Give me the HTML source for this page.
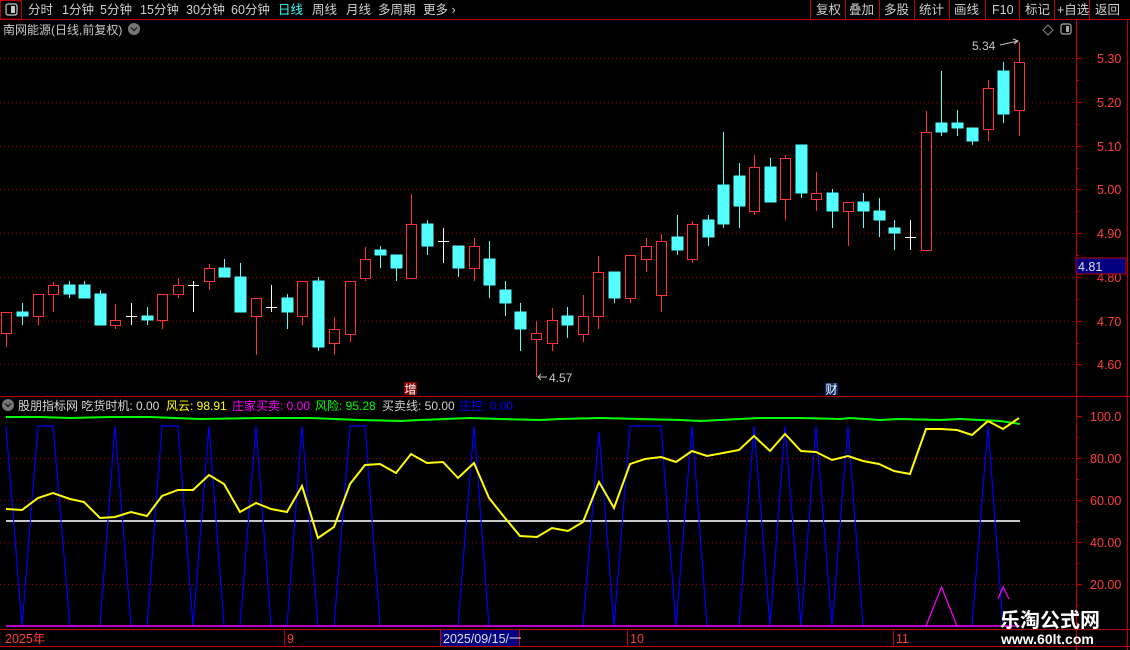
<!DOCTYPE html>
<html><head><meta charset="utf-8"><style>
html,body{margin:0;padding:0;background:#000;overflow:hidden}
svg{display:block}
text{font-family:"Liberation Sans","Noto Sans CJK SC",sans-serif}
</style></head><body>
<svg width="1130" height="650" viewBox="0 0 1130 650" xmlns="http://www.w3.org/2000/svg">
<rect width="1130" height="650" fill="#000"/>
<!-- top bar -->
<rect x="0.5" y="0.5" width="21" height="18.5" fill="none" stroke="#c00000"/>
<rect x="6" y="4" width="11" height="11" rx="2" fill="none" stroke="#c8c8c8" stroke-width="1.2"/>
<rect x="11" y="6" width="4" height="7" fill="#c8c8c8"/>
<line x1="0" y1="19.5" x2="1130" y2="19.5" stroke="#c00000"/>
<g font-size="12.5" fill="#d0d0d0">
<text x="28" y="14">分时</text><text x="62" y="14">1分钟</text><text x="100" y="14">5分钟</text>
<text x="140" y="14">15分钟</text><text x="186" y="14">30分钟</text><text x="231" y="14">60分钟</text>
<text x="278" y="14" fill="#33ffff">日线</text><text x="312" y="14">周线</text><text x="346" y="14">月线</text>
<text x="378" y="14">多周期</text><text x="423" y="14">更多 ›</text>
<text x="816" y="14">复权</text><text x="849" y="14">叠加</text><text x="884" y="14">多股</text>
<text x="919" y="14">统计</text><text x="954" y="14">画线</text><text x="992" y="14">F10</text>
<text x="1025" y="14">标记</text><text x="1057" y="14">+自选</text><text x="1095" y="14">返回</text>
</g>
<g stroke="#c00000"><line x1="810.5" y1="0" x2="810.5" y2="19"/><line x1="845.5" y1="0" x2="845.5" y2="19"/><line x1="879.5" y1="0" x2="879.5" y2="19"/><line x1="914.5" y1="0" x2="914.5" y2="19"/><line x1="949.5" y1="0" x2="949.5" y2="19"/><line x1="985.5" y1="0" x2="985.5" y2="19"/><line x1="1019.5" y1="0" x2="1019.5" y2="19"/><line x1="1054.5" y1="0" x2="1054.5" y2="19"/><line x1="1089.5" y1="0" x2="1089.5" y2="19"/></g>
<!-- title -->
<text x="3" y="34" font-size="12" fill="#c8c8c8">南网能源(日线,前复权)</text>
<circle cx="134" cy="29" r="6" fill="#777"/><path d="M131 27.5l3 3 3-3" stroke="#222" stroke-width="1.5" fill="none"/>
<path d="M1048 25l5 5-5 5-5-5z" fill="none" stroke="#888"/>
<rect x="1061" y="24" width="10" height="10" rx="2" fill="none" stroke="#aaa" stroke-width="1.2"/><rect x="1066" y="26" width="3" height="6" fill="#aaa"/>
<!-- right axis -->
<line x1="1076.5" y1="19" x2="1076.5" y2="650" stroke="#c00000"/>
<line x1="1127.5" y1="19" x2="1127.5" y2="650" stroke="#c00000"/>
<!-- grid main -->
<g stroke="#a00000" stroke-dasharray="1,3">
<line x1="0" y1="58.5" x2="1076" y2="58.5"/><line x1="0" y1="102.5" x2="1076" y2="102.5"/><line x1="0" y1="146.5" x2="1076" y2="146.5"/><line x1="0" y1="189.5" x2="1076" y2="189.5"/><line x1="0" y1="233.5" x2="1076" y2="233.5"/><line x1="0" y1="277.5" x2="1076" y2="277.5"/><line x1="0" y1="321.5" x2="1076" y2="321.5"/><line x1="0" y1="364.5" x2="1076" y2="364.5"/>
</g>
<g stroke="#c00000">
<line x1="1076" y1="58.5" x2="1082" y2="58.5"/><line x1="1076" y1="102.5" x2="1082" y2="102.5"/><line x1="1076" y1="146.5" x2="1082" y2="146.5"/><line x1="1076" y1="189.5" x2="1082" y2="189.5"/><line x1="1076" y1="233.5" x2="1082" y2="233.5"/><line x1="1076" y1="277.5" x2="1082" y2="277.5"/><line x1="1076" y1="321.5" x2="1082" y2="321.5"/><line x1="1076" y1="364.5" x2="1082" y2="364.5"/>
<line x1="1076" y1="80.5" x2="1079" y2="80.5"/><line x1="1076" y1="124.5" x2="1079" y2="124.5"/><line x1="1076" y1="168.5" x2="1079" y2="168.5"/><line x1="1076" y1="211.5" x2="1079" y2="211.5"/><line x1="1076" y1="255.5" x2="1079" y2="255.5"/><line x1="1076" y1="299.5" x2="1079" y2="299.5"/><line x1="1076" y1="343.5" x2="1079" y2="343.5"/>
</g>
<g font-size="12.5" fill="#ff3c3c">
<text x="1097" y="63">5.30</text><text x="1097" y="107">5.20</text><text x="1097" y="151">5.10</text><text x="1097" y="194">5.00</text><text x="1097" y="238">4.90</text><text x="1097" y="282">4.80</text><text x="1097" y="326">4.70</text><text x="1097" y="369">4.60</text>
</g>
<rect x="1076" y="258" width="50" height="16" fill="#000080" stroke="#c00000"/>
<text x="1078" y="271" font-size="12.5" fill="#e0e0e0">4.81</text>
<!-- candles -->
<g stroke-width="1">
<g stroke="#54ffff" fill="#54ffff">
<line x1="22.5" y1="303" x2="22.5" y2="325"/><rect x="17" y="312" width="11" height="4"/>
<line x1="69.5" y1="281" x2="69.5" y2="298"/><rect x="64" y="285" width="11" height="9"/>
<line x1="84.5" y1="281" x2="84.5" y2="298"/><rect x="79" y="285" width="11" height="13"/>
<line x1="100.5" y1="290" x2="100.5" y2="325"/><rect x="95" y="294" width="11" height="31"/>
<line x1="147.5" y1="307" x2="147.5" y2="325"/><rect x="142" y="316" width="11" height="4"/>
<line x1="224.5" y1="259" x2="224.5" y2="277"/><rect x="219" y="268" width="11" height="9"/>
<line x1="240.5" y1="263" x2="240.5" y2="312"/><rect x="235" y="277" width="11" height="35"/>
<line x1="287.5" y1="294" x2="287.5" y2="329"/><rect x="282" y="298" width="11" height="14"/>
<line x1="318.5" y1="277" x2="318.5" y2="351"/><rect x="313" y="281" width="11" height="66"/>
<line x1="380.5" y1="246" x2="380.5" y2="268"/><rect x="375" y="250" width="11" height="5"/>
<line x1="396.5" y1="255" x2="396.5" y2="281"/><rect x="391" y="255" width="11" height="13"/>
<line x1="427.5" y1="220" x2="427.5" y2="255"/><rect x="422" y="224" width="11" height="22"/>
<line x1="458.5" y1="246" x2="458.5" y2="277"/><rect x="453" y="246" width="11" height="22"/>
<line x1="489.5" y1="241" x2="489.5" y2="298"/><rect x="484" y="259" width="11" height="26"/>
<line x1="505.5" y1="281" x2="505.5" y2="316"/><rect x="500" y="290" width="11" height="13"/>
<line x1="520.5" y1="303" x2="520.5" y2="351"/><rect x="515" y="312" width="11" height="17"/>
<line x1="567.5" y1="307" x2="567.5" y2="338"/><rect x="562" y="316" width="11" height="9"/>
<line x1="614.5" y1="272" x2="614.5" y2="303"/><rect x="609" y="272" width="11" height="26"/>
<line x1="677.5" y1="215" x2="677.5" y2="255"/><rect x="672" y="237" width="11" height="13"/>
<line x1="708.5" y1="215" x2="708.5" y2="246"/><rect x="703" y="220" width="11" height="17"/>
<line x1="723.5" y1="132" x2="723.5" y2="228"/><rect x="718" y="185" width="11" height="39"/>
<line x1="739.5" y1="163" x2="739.5" y2="228"/><rect x="734" y="176" width="11" height="30"/>
<line x1="770.5" y1="158" x2="770.5" y2="202"/><rect x="765" y="167" width="11" height="35"/>
<line x1="801.5" y1="145" x2="801.5" y2="198"/><rect x="796" y="145" width="11" height="48"/>
<line x1="832.5" y1="189" x2="832.5" y2="228"/><rect x="827" y="193" width="11" height="18"/>
<line x1="863.5" y1="193" x2="863.5" y2="228"/><rect x="858" y="202" width="11" height="9"/>
<line x1="879.5" y1="198" x2="879.5" y2="237"/><rect x="874" y="211" width="11" height="9"/>
<line x1="894.5" y1="220" x2="894.5" y2="250"/><rect x="889" y="228" width="11" height="5"/>
<line x1="941.5" y1="71" x2="941.5" y2="136"/><rect x="936" y="123" width="11" height="9"/>
<line x1="957.5" y1="110" x2="957.5" y2="136"/><rect x="952" y="123" width="11" height="5"/>
<line x1="972.5" y1="128" x2="972.5" y2="145"/><rect x="967" y="128" width="11" height="13"/>
<line x1="1003.5" y1="62" x2="1003.5" y2="123"/><rect x="998" y="71" width="11" height="43"/>
</g>
<g stroke="#ff3232" fill="#000">
<line x1="6.5" y1="312" x2="6.5" y2="347"/><rect x="1.5" y="312.5" width="10" height="21"/>
<line x1="38.5" y1="294" x2="38.5" y2="325"/><rect x="33.5" y="294.5" width="10" height="22"/>
<line x1="53.5" y1="282" x2="53.5" y2="312"/><rect x="48.5" y="285.5" width="10" height="9"/>
<line x1="115.5" y1="304" x2="115.5" y2="329"/><rect x="110.5" y="320.5" width="10" height="5"/>
<line x1="162.5" y1="294" x2="162.5" y2="329"/><rect x="157.5" y="294.5" width="10" height="26"/>
<line x1="178.5" y1="278" x2="178.5" y2="298"/><rect x="173.5" y="285.5" width="10" height="9"/>
<line x1="209.5" y1="264" x2="209.5" y2="290"/><rect x="204.5" y="268.5" width="10" height="13"/>
<line x1="256.5" y1="298" x2="256.5" y2="355"/><rect x="251.5" y="298.5" width="10" height="18"/>
<line x1="302.5" y1="281" x2="302.5" y2="325"/><rect x="297.5" y="281.5" width="10" height="35"/>
<line x1="334.5" y1="317" x2="334.5" y2="355"/><rect x="329.5" y="329.5" width="10" height="14"/>
<line x1="350.5" y1="281" x2="350.5" y2="342"/><rect x="345.5" y="281.5" width="10" height="53"/>
<line x1="365.5" y1="247" x2="365.5" y2="281"/><rect x="360.5" y="259.5" width="10" height="19"/>
<line x1="411.5" y1="194" x2="411.5" y2="278"/><rect x="406.5" y="224.5" width="10" height="54"/>
<line x1="474.5" y1="238" x2="474.5" y2="281"/><rect x="469.5" y="246.5" width="10" height="22"/>
<line x1="536.5" y1="321" x2="536.5" y2="377"/><rect x="531.5" y="333.5" width="10" height="6"/>
<line x1="552.5" y1="308" x2="552.5" y2="351"/><rect x="547.5" y="320.5" width="10" height="23"/>
<line x1="583.5" y1="295" x2="583.5" y2="342"/><rect x="578.5" y="316.5" width="10" height="18"/>
<line x1="598.5" y1="256" x2="598.5" y2="329"/><rect x="593.5" y="272.5" width="10" height="44"/>
<line x1="630.5" y1="255" x2="630.5" y2="303"/><rect x="625.5" y="255.5" width="10" height="43"/>
<line x1="646.5" y1="238" x2="646.5" y2="272"/><rect x="641.5" y="246.5" width="10" height="13"/>
<line x1="661.5" y1="234" x2="661.5" y2="312"/><rect x="656.5" y="241.5" width="10" height="54"/>
<line x1="692.5" y1="221" x2="692.5" y2="263"/><rect x="687.5" y="224.5" width="10" height="35"/>
<line x1="754.5" y1="155" x2="754.5" y2="215"/><rect x="749.5" y="167.5" width="10" height="44"/>
<line x1="785.5" y1="155" x2="785.5" y2="220"/><rect x="780.5" y="158.5" width="10" height="41"/>
<line x1="816.5" y1="172" x2="816.5" y2="211"/><rect x="811.5" y="193.5" width="10" height="6"/>
<line x1="848.5" y1="202" x2="848.5" y2="246"/><rect x="843.5" y="202.5" width="10" height="9"/>
<line x1="926.5" y1="111" x2="926.5" y2="250"/><rect x="921.5" y="132.5" width="10" height="118"/>
<line x1="988.5" y1="80" x2="988.5" y2="141"/><rect x="983.5" y="88.5" width="10" height="41"/>
<line x1="1019.5" y1="42" x2="1019.5" y2="136"/><rect x="1014.5" y="62.5" width="10" height="48"/>
</g>
<g stroke="#fff">
<line x1="131.5" y1="303" x2="131.5" y2="325"/><line x1="126" y1="316.5" x2="137" y2="316.5"/>
<line x1="193.5" y1="281" x2="193.5" y2="312"/><line x1="188" y1="285.5" x2="199" y2="285.5"/>
<line x1="271.5" y1="285" x2="271.5" y2="312"/><line x1="266" y1="307.5" x2="277" y2="307.5"/>
<line x1="443.5" y1="228" x2="443.5" y2="263"/><line x1="438" y1="241.5" x2="449" y2="241.5"/>
<line x1="910.5" y1="220" x2="910.5" y2="250"/><line x1="905" y1="237.5" x2="916" y2="237.5"/>
</g>
</g>
<!-- annotations -->
<text x="972" y="50" font-size="12" fill="#c8c8c8">5.34</text>
<path d="M1000 45l18-4M1013 39l5 2-4 3" stroke="#c8c8c8" fill="none"/>
<path d="M538 377h9M541 374l-3 3 3 3" stroke="#c8c8c8" fill="none"/>
<text x="549" y="382" font-size="12" fill="#c8c8c8">4.57</text>
<rect x="404" y="382" width="13" height="13" fill="#800000"/><text x="404.5" y="393.5" font-size="12" fill="#fff">增</text>
<rect x="825" y="383" width="13" height="12" fill="#0a2a6a"/><text x="825.5" y="393.5" font-size="12" fill="#fff">财</text>
<line x1="0" y1="396.5" x2="1130" y2="396.5" stroke="#c00000"/>
<!-- indicator title -->
<circle cx="8" cy="405" r="6" fill="#777"/><path d="M5 403.5l3 3 3-3" stroke="#222" stroke-width="1.5" fill="none"/>
<g font-size="12">
<text x="18" y="410" fill="#d8d8d8">股朋指标网 吃货时机: 0.00</text>
<text x="166" y="410" fill="#ffff00">风云: 98.91</text>
<text x="232" y="410" fill="#ff00ff">庄家买卖: 0.00</text>
<text x="315" y="410" fill="#00ff00">风险: 95.28</text>
<text x="382" y="410" fill="#d0d0d0">买卖线: 50.00</text>
<text x="459" y="410" fill="#0000ff">庄控: 0.00</text>
</g>
<!-- indicator grid -->
<g stroke="#a00000" stroke-dasharray="1,3">
<line x1="0" y1="458.5" x2="1076" y2="458.5"/><line x1="0" y1="500.5" x2="1076" y2="500.5"/><line x1="0" y1="542.5" x2="1076" y2="542.5"/><line x1="0" y1="584.5" x2="1076" y2="584.5"/>
</g>
<g stroke="#c00000"><line x1="1076" y1="416.5" x2="1082" y2="416.5"/><line x1="1076" y1="458.5" x2="1082" y2="458.5"/><line x1="1076" y1="500.5" x2="1082" y2="500.5"/><line x1="1076" y1="542.5" x2="1082" y2="542.5"/><line x1="1076" y1="584.5" x2="1082" y2="584.5"/><line x1="1076" y1="437.5" x2="1079" y2="437.5"/><line x1="1076" y1="479.5" x2="1079" y2="479.5"/><line x1="1076" y1="521.5" x2="1079" y2="521.5"/><line x1="1076" y1="563.5" x2="1079" y2="563.5"/><line x1="1076" y1="605.5" x2="1079" y2="605.5"/></g>
<g font-size="12.5" fill="#ff3c3c">
<text x="1090" y="421">100.0</text><text x="1090" y="463">80.00</text><text x="1090" y="505">60.00</text><text x="1090" y="547">40.00</text><text x="1090" y="589">20.00</text>
</g>
<!-- indicator lines -->
<line x1="6" y1="521" x2="1020" y2="521" stroke="#c8c8c8" stroke-width="2"/>
<polyline fill="none" stroke="#0000ff" stroke-width="1.2" points="6,426 22,626 38,426 53,426 70,626 100,626 115,426 131,626 147,626 162,426 178,426 193,626 209,426 224,626 240,626 256,426 271,626 287,626 302,426 318,626 334,626 350,426 365,426 380,626 458,626 474,426 489,626 583,626 599,432 614,626 630,426 661,426 676,626 692,426 707,626 739,626 754,426 770,626 785,426 801,626 816,426 832,626 848,426 863,626 972,626 988,426 1003,626"/>
<line x1="6" y1="626" x2="1020" y2="626" stroke="#ff00ff" stroke-width="1.5"/>
<polyline fill="none" stroke="#ff00ff" stroke-width="1.2" points="926,626 941.5,587 957,626"/>
<polyline fill="none" stroke="#ff00ff" stroke-width="1.2" points="998,599 1003,587 1009,599"/>
<polyline fill="none" stroke="#00ff00" stroke-width="2" points="6,417 40,417 70,418 110,417 150,417 200,419 260,418 310,418 360,420 400,421 420,420 470,418 500,419 540,420 560,419 600,418 640,419 680,420 700,421 720,420 740,419 760,418 800,418 840,419 850,418 880,420 900,419 940,420 960,419 980,420 1000,421 1020,424"/>
<polyline fill="none" stroke="#ffff00" stroke-width="2" points="6,509 22,510 38,498 53,493 70,499 84,502 100,518 115,517 131,512 147,516 162,496 178,490 193,490 209,475 224,484 240,512 256,503 271,509 287,512 302,486 318,538 334,527 350,484 365,465 380,464 396,473 411,454 427,463 443,462 458,478 474,463 489,498 505,518 520,536 537,537 552,528 568,531 583,522 599,482 614,508 630,464 645,459 661,457 676,462 692,451 707,456 723,453 739,450 754,436 770,451 785,434 801,451 816,452 832,460 848,456 863,461 879,464 894,471 910,474 926,429 941,429 957,430 972,435 988,421 1003,429 1019,418"/>
<!-- date bar -->
<line x1="0" y1="629.5" x2="1130" y2="629.5" stroke="#c00000"/>
<line x1="0" y1="646.5" x2="1130" y2="646.5" stroke="#c00000"/>
<g stroke="#c00000"><line x1="284.5" y1="630" x2="284.5" y2="646"/><line x1="627.5" y1="630" x2="627.5" y2="646"/><line x1="893.5" y1="630" x2="893.5" y2="646"/><line x1="440.5" y1="630" x2="440.5" y2="646"/><line x1="519.5" y1="630" x2="519.5" y2="646"/></g>
<g font-size="12.5" fill="#ff3c3c"><text x="5" y="643">2025年</text><text x="287" y="643">9</text><text x="630" y="643">10</text><text x="896" y="643">11</text></g>
<rect x="441" y="630" width="78" height="16" fill="#000080"/>
<text x="443" y="643" font-size="12.5" fill="#e0e0e0">2025/09/15/一</text>
<!-- watermark -->
<text x="1000" y="627" font-size="20" font-weight="bold" fill="#fff" font-family="'Noto Serif CJK SC','Noto Sans CJK SC',serif">乐淘公式网</text>
<text x="1001" y="644" font-size="14" font-weight="bold" fill="#fff" font-family="'Liberation Serif',serif">www.60lt.com</text>
</svg>
</body></html>
